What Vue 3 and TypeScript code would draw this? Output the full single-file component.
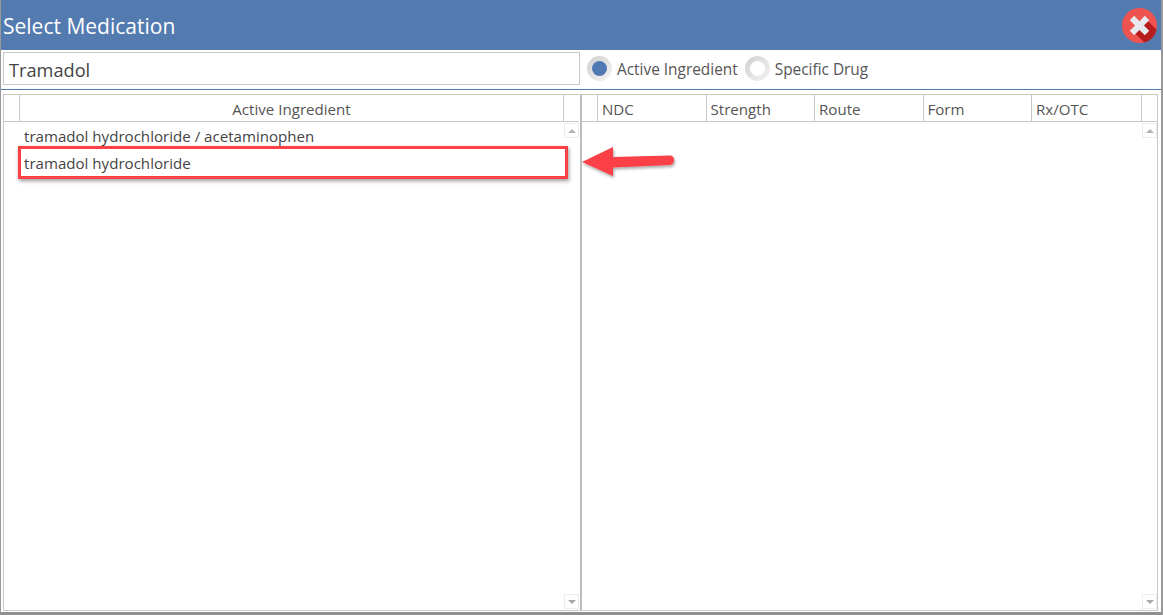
<script setup lang="ts">
const rows: string[] = ['tramadol hydrochloride / acetaminophen', 'tramadol hydrochloride']
const cols: string[] = ['NDC', 'Strength', 'Route', 'Form', 'Rx/OTC']
</script>

<template>
  <div class="window">
    <header class="title">
      <span class="title-text">Select Medication</span>
      <svg class="close" width="35" height="35" viewBox="0 0 36 36">
        <circle cx="18" cy="18" r="18" fill="#ef5350" />
        <path d="M11 24 L24 11 L35.500 22 A18 18 0 0 1 23 35.500 Z" fill="#b71c1c" />
        <path d="M12.500 8 L18 13.500 L23.500 8 L28 12.500 L22.500 18 L28 23.500 L23.500 28 L18 22.500 L12.500 28 L8 23.500 L13.500 18 L8 12.500 Z" fill="#e6e9ed" />
      </svg>
    </header>
    <div class="search">
      <div class="input">Tramadol</div>
      <label class="radio"><span class="dot on"></span>Active Ingredient</label>
      <label class="radio second"><span class="dot"></span>Specific Drug</label>
    </div>
    <div class="panes">
      <section class="pane left">
        <div class="head">
          <div class="cell stub"></div>
          <div class="cell grow center">Active Ingredient</div>
          <div class="end"></div>
        </div>
        <div class="body">
          <div class="list">
            <div v-for="r in rows" :key="r" class="row">{{ r }}</div>
          </div>
          <div class="scroll">
            <span class="btn"><i class="up"></i></span>
            <span class="btn"><i class="down"></i></span>
          </div>
        </div>
      </section>
      <section class="pane right">
        <div class="head">
          <div class="cell stub"></div>
          <div v-for="c in cols" :key="c" class="cell col">{{ c }}</div>
          <div class="end"></div>
        </div>
        <div class="body">
          <div class="list"></div>
          <div class="scroll">
            <span class="btn"><i class="up"></i></span>
            <span class="btn"><i class="down"></i></span>
          </div>
        </div>
      </section>
    </div>
    <div class="highlight"></div>
    <svg class="arrow" width="100" height="44" viewBox="0 0 100 44">
      <defs>
        <filter id="sh" x="-20%" y="-30%" width="140%" height="170%">
          <feDropShadow dx="1" dy="2" stdDeviation="1.500" flood-color="#000" flood-opacity="0.35" />
        </filter>
      </defs>
      <path d="M2 20 L33 5 L33 15 L90 13.500 Q94 13.500 94 18 Q94 22 90 23 L33 25.500 L33 34 Z" fill="#fb4046" filter="url(#sh)" />
    </svg>
  </div>
</template>

<style>
html, body { margin: 0; background: #fff; }
</style>

<style scoped>
.window {
  position: relative;
  box-sizing: border-box;
  width: 1163px;
  height: 615px;
  display: flex;
  flex-direction: column;
  background: #fff;
  border-left: 1px solid #999;
  border-right: 2px solid #999;
  border-bottom: 3px solid #8f8f8f;
  font-family: "Open Sans", "Noto Sans", sans-serif;
  color: #444;
  overflow: hidden;
}
.title {
  height: 50px;
  flex: none;
  margin: 0 -2px 0 -1px;
  padding: 0 6px 0 3px;
  background: #537bb0;
  color: #fff;
  font-size: 21px;
  display: flex;
  align-items: center;
  justify-content: space-between;
}
.title-text { margin-top: 2px; }
.close { margin-top: 1px; }
.search {
  height: 40px;
  flex: none;
  box-sizing: border-box;
  border-bottom: 1px solid #537bb0;
  display: flex;
  align-items: flex-start;
  padding: 2px 0 0 2px;
}
.input {
  box-sizing: border-box;
  width: 577px;
  height: 33px;
  border: 1px solid #c8c8c8;
  padding-left: 5px;
  font-size: 18.200px;
  line-height: 34px;
}
.radio {
  display: flex;
  align-items: center;
  height: 34px;
  margin-left: 7px;
  font-size: 15.400px;
  color: #555;
}
.dot {
  width: 25px;
  height: 25px;
  border-radius: 50%;
  margin-right: 5px;
  margin-top: -1px;
  background: linear-gradient(135deg, #cfcfcf, #f4f4f4);
  display: flex;
  align-items: center;
  justify-content: center;
}
.dot::after {
  content: "";
  width: 15px;
  height: 15px;
  border-radius: 50%;
  background: #fff;
}
.dot.on::after { background: #4f79b3; }
.panes {
  flex: 1;
  display: flex;
  margin: 4px 0 0 2px;
  min-height: 0;
}
.pane {
  display: flex;
  flex-direction: column;
  box-sizing: border-box;
  border: 1px solid #c8c8c8;
  height: 517px;
}
.left { width: 577px; border-right: 1px solid #fff; }
.right { width: 578px; border-left: 2px solid #bdbdbd; }
.head {
  height: 27px;
  flex: none;
  box-sizing: border-box;
  border-bottom: 1px solid #c8c8c8;
  display: flex;
  font-size: 15.100px;
}
.cell {
  box-sizing: border-box;
  border-right: 1px solid #c8c8c8;
  line-height: 29px;
  padding-left: 4px;
  color: #555;
}
.stub { width: 16px; flex: none; padding: 0; }
.grow { flex: none; width: 544px; padding: 0; }
.center { text-align: center; }
.col { width: 108.500px; flex: none; }
.col:nth-child(6) { width: 110px; }
.end { flex: 1; }
.body { flex: 1; display: flex; min-height: 0; }
.list { flex: 1; padding: 1px 0 0 20px; }
.row {
  height: 27px;
  line-height: 27px;
  font-size: 15.100px;
  color: #444;
}
.scroll {
  width: 15px;
  flex: none;
  display: flex;
  flex-direction: column;
  justify-content: space-between;
  padding: 1px 0;
  box-sizing: border-box;
}
.btn {
  box-sizing: border-box;
  width: 15px;
  height: 15px;
  border: 1px solid #ededed;
  display: flex;
  align-items: center;
  justify-content: center;
}
.up, .down {
  width: 0;
  height: 0;
  border-left: 4px solid transparent;
  border-right: 4px solid transparent;
}
.up { border-bottom: 4px solid #b4b4b4; }
.down { border-top: 4px solid #a8a8a8; }
.highlight {
  position: absolute;
  left: 17px;
  top: 146px;
  width: 550px;
  height: 33px;
  box-sizing: border-box;
  border: 3px solid #fb4046;
  box-shadow: 1px 2px 4px rgba(0, 0, 0, 0.4);
}
.arrow {
  position: absolute;
  left: 579px;
  top: 142px;
}
</style>
